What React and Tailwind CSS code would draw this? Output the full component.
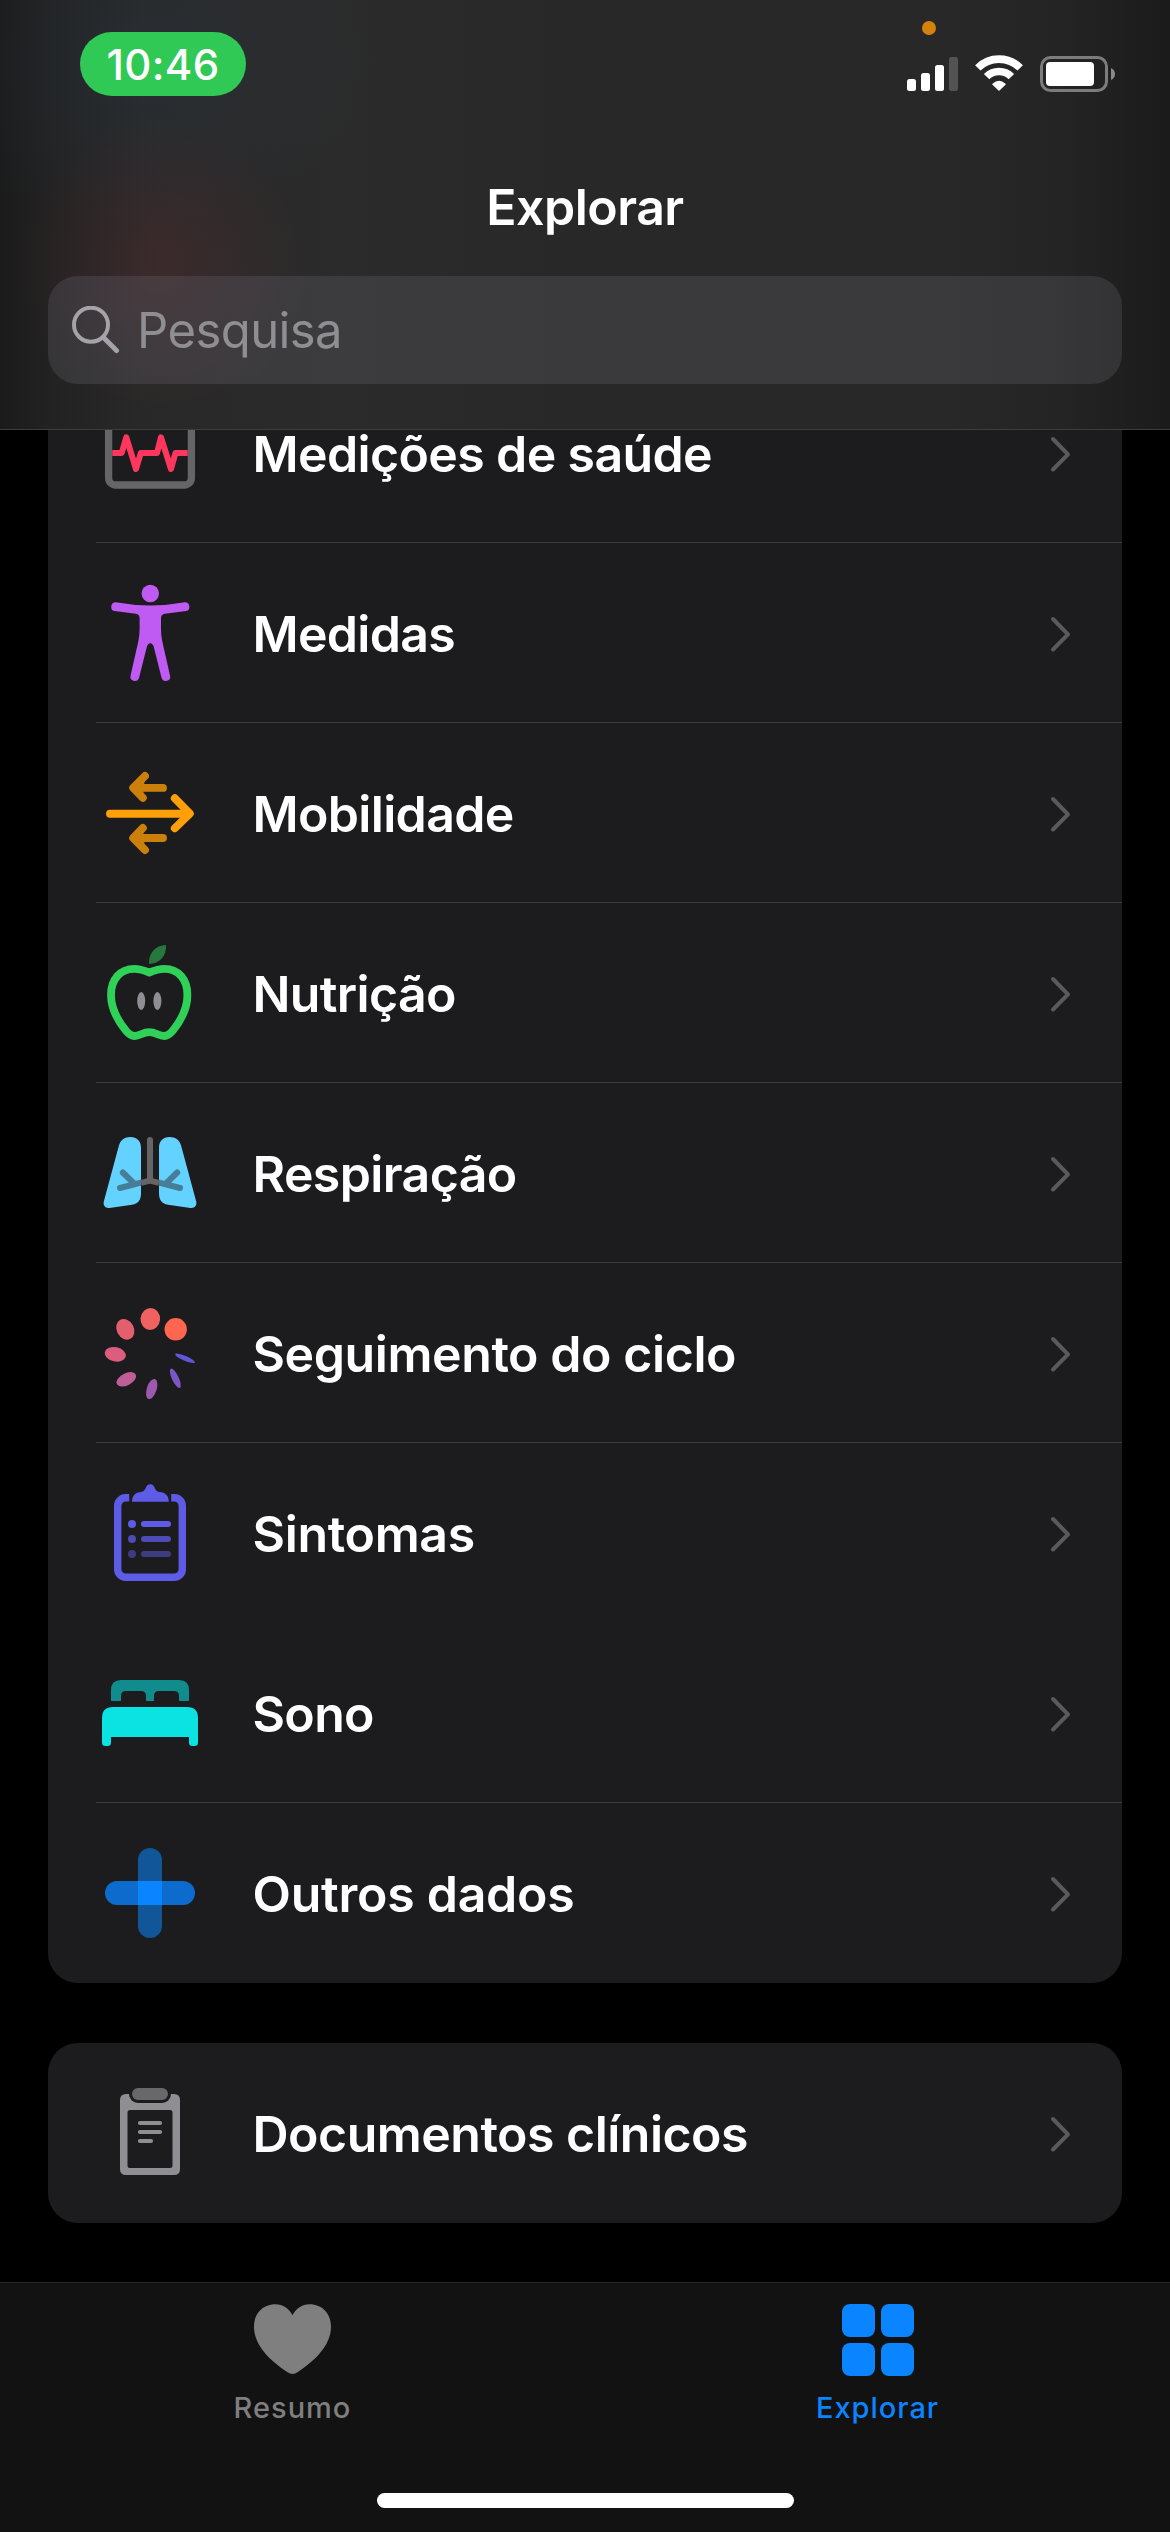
import React from "react";

function VitalsIcon() {
  return (
    <>
      <rect x="12.6" y="10" width="82.8" height="82" rx="7" fill="none" stroke="#656567" strokeWidth="7.3" />
      <path
        d="M16.3 60H25.7L30.3 44.3L40 76L44.8 60H61L65 44.3L75 76L79.5 60H91.7"
        fill="none"
        stroke="#ff375f"
        strokeWidth="6"
        strokeLinejoin="round"
      />
    </>
  );
}

function BodyIcon() {
  return (
    <g fill="#bf5af2">
      <circle cx="54.3" cy="20.5" r="8.7" />
      <path d="M19.7 29.3Q54.3 35.7 88.9 29.3A4.5 4.5 0 0 1 90.2 38.1L68.8 40.8Q65 41.6 65 45.3V56Q65 62 66.2 68L74 102.4A4.4 4.4 0 0 1 65.6 105L57.8 74Q56.6 70.3 54.3 70.3Q52 70.3 50.8 74L43 105A4.4 4.4 0 0 1 34.6 102.4L42.4 68Q43.6 62 43.6 56V45.3Q43.6 41.6 39.8 40.8L18.4 38.1A4.5 4.5 0 0 1 19.7 29.3Z" />
    </g>
  );
}

function MobilityIcon() {
  return (
    <g fill="none" strokeWidth="7.9" strokeLinecap="round" strokeLinejoin="round">
      <g stroke="#cb800c" fill="#cb800c">
        <path d="M49 23L37.2 34.8L46.8 44.8" />
        <path d="M38 34.9H67" />
        <path d="M46.8 75L37.2 85L49 97" />
        <path d="M38 85H67" />
      </g>
      <g stroke="#ff9f0a">
        <path d="M14 60.8H92" />
        <path d="M78.8 45.3L93.8 60.6L78.8 75.3" />
      </g>
    </g>
  );
}

function AppleIcon() {
  return (
    <>
      <path
        d="M53.3 39.5C47 37 43.5 35.9 38.3 35.9C24 35.9 15 46.5 15 62C15 76 22 88 30 97.8C33 101.4 35 103 38.5 103C44 103 46.5 99.2 53.3 99.2C60 99.2 62.6 103 68.2 103C71.7 103 73.7 101.4 76.7 97.8C84.7 88 91.4 76 91.4 62C91.4 46.5 82.7 35.9 68.3 35.9C63 35.9 59.6 37 53.3 39.5Z"
        fill="none"
        stroke="#30d158"
        strokeWidth="7.8"
        strokeLinejoin="round"
      />
      <ellipse cx="45.2" cy="68" rx="4" ry="9" fill="#8e8e93" />
      <ellipse cx="61.4" cy="68" rx="4" ry="9" fill="#8e8e93" />
      <path d="M53 31C52.3 20.5 59.5 12 70 12C70.8 22.5 63.5 31 53 31Z" fill="#26783c" />
    </>
  );
}

function LungsIcon() {
  const lung =
    "M34.5 24C41 24 45 28 45 35V80.5C45 87 42 90.8 36 91.7L13.5 94.9C9.5 95.4 6.8 92.5 7.8 88.5L22.8 33C24.4 27 28.5 24 34.5 24Z";
  return (
    <>
      <path d={lung} fill="#64d2ff" />
      <path d={lung} fill="#64d2ff" transform="translate(108 0) scale(-1 1)" />
      <g fill="none" stroke="#467e97" strokeWidth="6" strokeLinecap="round">
        <path d="M45 69.7L24 75M26.8 59.5L37.5 70" />
        <path d="M63 69.7L84 75M81.2 59.5L70.5 70" />
      </g>
      <path d="M45 63H63V76H45Z" fill="#1c1c1e" />
      <path d="M45 69.8L54 67.6L63 69.8" fill="none" stroke="#656568" strokeWidth="6" />
      <path d="M54 27V67" fill="none" stroke="#656568" strokeWidth="6" strokeLinecap="round" />
    </>
  );
}

const PETALS = [
  [79.7, 36.3, 11.2, 11.2, 0, "#ff6650"],
  [54.3, 26, 9.8, 10.9, 5, "#f06262"],
  [29.3, 36.3, 8.6, 10.8, -28, "#e35f6d"],
  [19.3, 61.3, 10.7, 7.2, 12, "#dc5d7e"],
  [30.3, 86.3, 10.6, 6, -27, "#bf5d96"],
  [55.7, 96, 10.5, 4.9, -72, "#9d59ad"],
  [79.3, 85.3, 10.6, 3.4, 65, "#7a57c5"],
  [89, 65.3, 10.8, 2.4, 23, "#5e57da"],
];

function CycleIcon() {
  return PETALS.map(([cx, cy, rx, ry, angle, fill]) => (
    <ellipse key={fill} cx={cx} cy={cy} rx={rx} ry={ry} fill={fill} transform={`rotate(${angle} ${cx} ${cy})`} />
  ));
}

function SymptomsIcon() {
  return (
    <>
      <path
        d="M33.2 24.7H29.7A8 8 0 0 0 21.7 32.7V96.3A8 8 0 0 0 29.7 104.3H78.3A8 8 0 0 0 86.3 96.3V32.7A8 8 0 0 0 78.3 24.7H75.2"
        fill="none"
        stroke="#5e5ce6"
        strokeWidth="7.4"
      />
      <path
        d="M36 28.7C36 22.5 39.5 19.3 45 19C51 18.5 48.5 11.3 54.3 11.3C60 11.3 57.5 18.5 63.5 19C69 19.3 72.8 22.5 72.8 28.7Z"
        fill="#5e5ce6"
      />
      <g fill="#5e5ce6">
        <circle cx="36" cy="51" r="4" />
        <rect x="45" y="48" width="30" height="6" rx="3" />
      </g>
      <g fill="#4d4bb6">
        <circle cx="36" cy="66" r="4" />
        <rect x="45" y="63" width="30" height="6" rx="3" />
      </g>
      <g fill="#3e3c80">
        <circle cx="36" cy="81" r="4" />
        <rect x="45" y="78" width="30" height="6" rx="3" />
      </g>
    </>
  );
}

function BedIcon() {
  return (
    <>
      <path
        d="M15 48V37Q15 27 25 27H83Q93 27 93 37V48H83V43Q83 38 78 38H63Q58 38 58 43V48H50V43Q50 38 45 38H30Q25 38 25 43V48Z"
        fill="#118c8d"
      />
      <path
        d="M6 65Q6 54 17 54H91Q102 54 102 65V89.5Q102 93 98.500 93H96.500Q93 93 93 89.500V84H15V89.500Q15 93 11.500 93H9.500Q6 93 6 89.500Z"
        fill="#0be3e2"
      />
    </>
  );
}

function PlusIcon() {
  return (
    <>
      <rect x="42" y="15" width="24" height="90" rx="12" fill="#12569a" />
      <rect x="9" y="48" width="90" height="24" rx="12" fill="#0c6bcc" />
      <rect x="42" y="48" width="24" height="24" fill="#0a84ff" />
    </>
  );
}

function DocumentIcon() {
  return (
    <>
      <path
        d="M30 21H78Q84 21 84 27V96Q84 102 78 102H30Q24 102 24 96V27Q24 21 30 21ZM34 37Q31.500 37 31.500 39.500V92.500Q31.500 95 34 95H74Q76.500 95 76.500 92.500V39.500Q76.500 37 74 37Z"
        fill="#8e8e93"
        fillRule="evenodd"
      />
      <rect x="33" y="12" width="42" height="18" rx="9" fill="#1c1c1e" />
      <rect x="36" y="15" width="36" height="12" rx="6" fill="#68686a" />
      <g stroke="#8e8e93" strokeWidth="4.200" strokeLinecap="round">
        <path d="M44 50H64M44 59H64M44 68H55" />
      </g>
    </>
  );
}

const CATEGORIES = [
  { label: "Medições de saúde", Icon: VitalsIcon, tracking: "tracking-[-0.62px]" },
  { label: "Medidas", Icon: BodyIcon, tracking: "tracking-[-0.7px]" },
  { label: "Mobilidade", Icon: MobilityIcon, tracking: "tracking-[-0.65px]" },
  { label: "Nutrição", Icon: AppleIcon, tracking: "tracking-[-0.64px]" },
  { label: "Respiração", Icon: LungsIcon, tracking: "tracking-[-0.6px]" },
  { label: "Seguimento do ciclo", Icon: CycleIcon, tracking: "tracking-[-0.42px]" },
  { label: "Sintomas", Icon: SymptomsIcon, tracking: "tracking-[-0.33px]", plain: true },
  { label: "Sono", Icon: BedIcon, tracking: "tracking-[-0.65px]" },
  { label: "Outros dados", Icon: PlusIcon, tracking: "tracking-[-0.25px]", plain: true },
];

function Row({ label, Icon, tracking, plain }) {
  const divider = plain ? "" : "shadow-[inset_0_-1px_0_#3b3b3d]";
  return (
    <li className={`ml-12 flex h-[180px] items-center pr-[50px] ${divider}`}>
      <svg className="h-[120px] w-[108px] shrink-0" viewBox="0 0 108 120">
        <Icon />
      </svg>
      <span className={`ml-[48.5px] flex-1 pt-0.5 text-[50px] leading-[60px] font-semibold whitespace-nowrap text-white ${tracking}`}>
        {label}
      </span>
      <svg className="mt-0.5 h-10 w-6 shrink-0" viewBox="0 0 24 40" fill="none" stroke="#5a5a5e" strokeWidth="4" strokeLinecap="round" strokeLinejoin="round">
        <path d="M5 5L20 20.300L5 35.500" />
      </svg>
    </li>
  );
}

function StatusIcons() {
  return (
    <div className="mt-[23px] mr-[55px] flex h-[37px] items-end gap-[17px]">
      <svg className="mb-px h-[34px] w-[51px]" viewBox="0 0 51 34" fill="#fff">
        <rect x="0" y="22" width="9" height="12" rx="2.500" />
        <rect x="14" y="16" width="9" height="18" rx="2.500" />
        <rect x="28" y="8" width="9" height="26" rx="2.500" />
        <rect x="42" y="0" width="9" height="34" rx="2.500" fill="#535353" />
      </svg>
      <svg className="mb-px h-9 w-12" viewBox="0 0 48 36" fill="none" stroke="#fff" strokeWidth="7.600">
        <path d="M2.800 12.900A29.900 29.900 0 0 1 45.200 12.900" />
        <path d="M11.600 21.700A17.300 17.300 0 0 1 36.400 21.700" />
        <path d="M18 29.200Q24 23.800 30 29.200L24 35Z" fill="#fff" strokeWidth="1.500" strokeLinejoin="round" />
      </svg>
      <svg className="h-9 w-[75px]" viewBox="0 0 75 36">
        <rect x="1.500" y="1.500" width="65" height="33" rx="9" fill="none" stroke="#7c7c7c" strokeWidth="3" />
        <rect x="6" y="6" width="48" height="24" rx="4" fill="#fff" />
        <path d="M71 12Q75 14 75 18Q75 22 71 24Z" fill="#8a8a8a" />
      </svg>
    </div>
  );
}

function Header() {
  return (
    <header className="relative z-10 flex h-[430px] shrink-0 flex-col border-b border-[#3d3d3f] bg-[radial-gradient(150px_150px_at_160px_265px,rgba(255,60,80,0.09),rgba(255,60,80,0.045)_50%,transparent),radial-gradient(240px_170px_at_140px_60px,rgba(60,140,220,0.055),transparent),linear-gradient(to_right,#1b1b1b_0px,#222222_50px,#282828_140px,#2b2b2b_340px,#2a2a2a_430px,#282828_560px,#282828_950px,#242424_1060px,#1b1b1b_1170px)] pt-8">
      <div className="absolute top-[21px] left-[922px] size-3.5 rounded-full bg-[#d4820c]" />
      <div className="flex h-16 items-start justify-between">
        <div className="ml-20 flex h-16 w-[166px] items-center justify-center rounded-[32px] bg-[#30c956] text-[42px] font-medium tracking-[0.3px] text-white">
          10:46
        </div>
        <StatusIcons />
      </div>
      <h1 className="mt-[81px] text-center text-[50px] leading-[60px] font-semibold tracking-[-0.5px] text-white">Explorar</h1>
      <div className="mx-12 mt-[39px] flex h-[108px] items-center rounded-[30px] bg-[rgba(118,118,128,0.24)] pl-6">
        <svg className="size-12" viewBox="0 0 48 48" fill="none" stroke="#a5a2aa" strokeLinecap="round">
          <circle cx="19" cy="18.700" r="17" strokeWidth="4" />
          <path d="M31.500 31.500L44.500 44.500" strokeWidth="5" />
        </svg>
        <span className="ml-[17px] pt-0.5 text-[49px] leading-[60px] tracking-[-0.58px] text-[#8f8e93]">Pesquisa</span>
      </div>
    </header>
  );
}

function TabBar() {
  return (
    <nav className="flex h-[250px] shrink-0 flex-col items-center border-t border-[#272727] bg-[#121212] text-[29px] leading-[35px] font-medium tracking-[1px]">
      <div className="grid w-full grid-cols-2 pt-[21px]">
        <div className="flex flex-col items-center text-[#7f7f7f]">
          <svg className="h-[72px] w-[77px]" viewBox="0 0 77 72" fill="currentColor">
            <path d="M38.500 11.300C35 4.500 29 0.300 21.500 0.300C9 0.300 0 9.500 0 22.500C0 41.500 16 56.500 33.500 68.300Q38.500 71.500 43.500 68.300C61 56.500 77 41.500 77 22.500C77 9.500 68 0.300 55.500 0.300C48 0.300 42 4.500 38.500 11.300Z" />
          </svg>
          <span className="mt-3.5">Resumo</span>
        </div>
        <div className="flex flex-col items-center text-[#0a84ff]">
          <div className="grid size-[72px] grid-cols-2 gap-1.5">
            <i className="rounded-lg bg-current" />
            <i className="rounded-lg bg-current" />
            <i className="rounded-lg bg-current" />
            <i className="rounded-lg bg-current" />
          </div>
          <span className="mt-3.5">Explorar</span>
        </div>
      </div>
      <div className="mt-[68px] h-[15px] w-[417px] rounded-full bg-white" />
    </nav>
  );
}

export default function App() {
  return (
    <div className="flex h-[2532px] w-[1170px] flex-col overflow-hidden bg-black font-['Inter',sans-serif]">
      <Header />
      <main className="mx-12 -mt-[67px] flex flex-1 flex-col gap-[60px]">
        <ul className="rounded-b-[30px] bg-[#1c1c1e]">
          {CATEGORIES.map((item) => (
            <Row key={item.label} {...item} />
          ))}
        </ul>
        <ul className="rounded-[30px] bg-[#1c1c1e]">
          <Row label="Documentos clínicos" Icon={DocumentIcon} tracking="tracking-[-0.51px]" plain />
        </ul>
      </main>
      <TabBar />
    </div>
  );
}
